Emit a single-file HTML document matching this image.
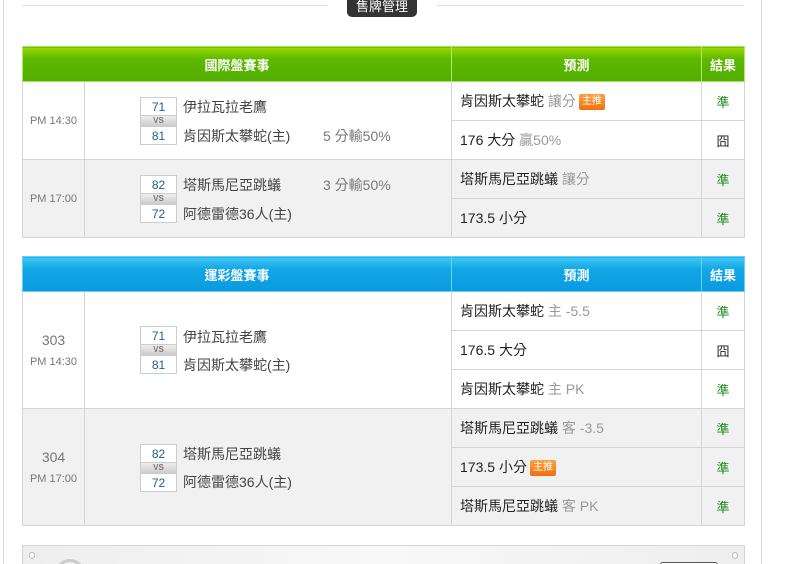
<!DOCTYPE html>
<html style="width:798px;height:564px;overflow:hidden"><head><meta charset="utf-8">
<style>
*{margin:0;padding:0;box-sizing:border-box}
body{width:798px;height:564px;overflow:hidden;background:#fff;font-family:"Liberation Sans","Noto Sans CJK TC",sans-serif;position:relative;color:#333}
.vl{position:absolute;top:0;width:1px;height:564px;background:#d8d8d8}
.hl{position:absolute;height:1px;background:#ddd}
.tag{position:absolute;left:347px;top:-4px;width:70px;height:21px;background:#333;border-radius:0 0 5px 5px;color:#fff;font-size:13px;text-align:center;line-height:22px}
table{position:absolute;left:22px;width:722px;border-collapse:collapse;table-layout:fixed;font-size:14px}
td,th{border:1px solid #d5d5d5;padding:0}
th{color:#fff;font-weight:bold;font-size:13px;height:35px;border-color:#a8e060}
.g th{background:linear-gradient(#9ad800,#5cb800 35%,#52ad00);border-left-color:#b0e868;border-right-color:#b0e868}
.b th{background:linear-gradient(#3ec8f4,#12a6e6 35%,#0a9ae0);border-color:#6cd0f4}
.time{text-align:center;color:#777;font-size:11px}
.num{font-size:14px;color:#777;display:block;margin-bottom:8px}
.gray td{background:#f1f1f1}
.pred{padding-left:8px;color:#222;height:39px}
.pred .s{color:#999}
.res{text-align:center;color:#222;font-size:13px}
.ok{color:#188a18}
.m{position:relative}
.sb{position:absolute;left:55px;width:37px}
.sb div{border:1px solid #ccc;background:#fff;height:19px;text-align:center;color:#1a5f9e;font-size:12px;line-height:18px}
.sb .vs{height:10px;border:1px solid #ccc;border-top:0;border-bottom:0;background:linear-gradient(#eee,#ccc);color:#777;font-size:8px;line-height:10px;font-weight:bold}
.tn{position:absolute;left:98px;color:#444;font-size:14px}
.x{position:absolute;left:238px;color:#777;font-size:14px}
.badge{display:inline-block;background:linear-gradient(#ffa040,#f07010);color:#fff;font-size:10px;padding:0 3px;height:16px;line-height:16px;border-radius:2px;vertical-align:2px;margin-left:3px}
</style></head><body>
<div class="vl" style="left:3px"></div>
<div class="vl" style="left:761px"></div>
<div class="hl" style="left:22px;top:5px;width:306px"></div>
<div class="hl" style="left:437px;top:5px;width:307px"></div>
<div class="tag">售牌管理</div>

<table class="g" style="top:46px">
<colgroup><col style="width:62px"><col style="width:367px"><col style="width:250px"><col style="width:43px"></colgroup>
<tr><th colspan="2">國際盤賽事</th><th>預測</th><th>結果</th></tr>
<tr><td rowspan="2" class="time">PM 14:30</td><td rowspan="2" class="m">
<div class="sb" style="top:15px"><div>71</div><div class="vs">VS</div><div>81</div></div>
<div class="tn" style="top:15px">伊拉瓦拉老鷹</div><div class="tn" style="top:44px">肯因斯太攀蛇(主)</div><div class="x" style="top:44px">5 分輸50%</div></td>
<td class="pred">肯因斯太攀蛇 <span class="s">讓分</span><span class="badge">主推</span></td><td class="res ok">準</td></tr>
<tr><td class="pred">176 大分 <span class="s">贏50%</span></td><td class="res">囧</td></tr>
<tr class="gray"><td rowspan="2" class="time">PM 17:00</td><td rowspan="2" class="m">
<div class="sb" style="top:15px"><div>82</div><div class="vs">VS</div><div>72</div></div>
<div class="tn" style="top:15px">塔斯馬尼亞跳蟻</div><div class="x" style="top:15px">3 分輸50%</div><div class="tn" style="top:44px">阿德雷德36人(主)</div></td>
<td class="pred">塔斯馬尼亞跳蟻 <span class="s">讓分</span></td><td class="res ok">準</td></tr>
<tr class="gray"><td class="pred">173.5 小分</td><td class="res ok">準</td></tr>
</table>

<table class="b" style="top:256px">
<colgroup><col style="width:62px"><col style="width:367px"><col style="width:250px"><col style="width:43px"></colgroup>
<tr><th colspan="2">運彩盤賽事</th><th>預測</th><th>結果</th></tr>
<tr><td rowspan="3" class="time"><span class="num">303</span>PM 14:30</td><td rowspan="3" class="m">
<div class="sb" style="top:34px"><div>71</div><div class="vs">VS</div><div>81</div></div>
<div class="tn" style="top:35px">伊拉瓦拉老鷹</div><div class="tn" style="top:63px">肯因斯太攀蛇(主)</div></td>
<td class="pred">肯因斯太攀蛇 <span class="s">主 -5.5</span></td><td class="res ok">準</td></tr>
<tr><td class="pred">176.5 大分</td><td class="res">囧</td></tr>
<tr><td class="pred">肯因斯太攀蛇 <span class="s">主 PK</span></td><td class="res ok">準</td></tr>
<tr class="gray"><td rowspan="3" class="time"><span class="num">304</span>PM 17:00</td><td rowspan="3" class="m">
<div class="sb" style="top:35px"><div>82</div><div class="vs">VS</div><div>72</div></div>
<div class="tn" style="top:35px">塔斯馬尼亞跳蟻</div><div class="tn" style="top:63px">阿德雷德36人(主)</div></td>
<td class="pred">塔斯馬尼亞跳蟻 <span class="s">客 -3.5</span></td><td class="res ok">準</td></tr>
<tr class="gray"><td class="pred">173.5 小分<span class="badge">主推</span></td><td class="res ok">準</td></tr>
<tr class="gray"><td class="pred">塔斯馬尼亞跳蟻 <span class="s">客 PK</span></td><td class="res ok">準</td></tr>
</table>

<div style="position:absolute;left:22px;top:545px;width:723px;height:19px;overflow:hidden;border:1px solid #d5d5d5;border-bottom:0;background:linear-gradient(90deg,#eee,#f8f8f8 50%,#eee)">
<div style="position:absolute;left:6px;top:6px;width:6px;height:7px;border:1px solid #bbb;border-radius:50%;background:#fff"></div>
<div style="position:absolute;right:6px;top:6px;width:6px;height:7px;border:1px solid #bbb;border-radius:50%;background:#fff"></div>
<div style="position:absolute;left:32px;top:13px;width:30px;height:30px;border:3px solid #ccc;border-radius:50%"></div>
<div style="position:absolute;left:637px;top:16px;width:58px;height:20px;border:1px solid #555;border-radius:3px;background:#fff"></div>
</div>
</body></html>
